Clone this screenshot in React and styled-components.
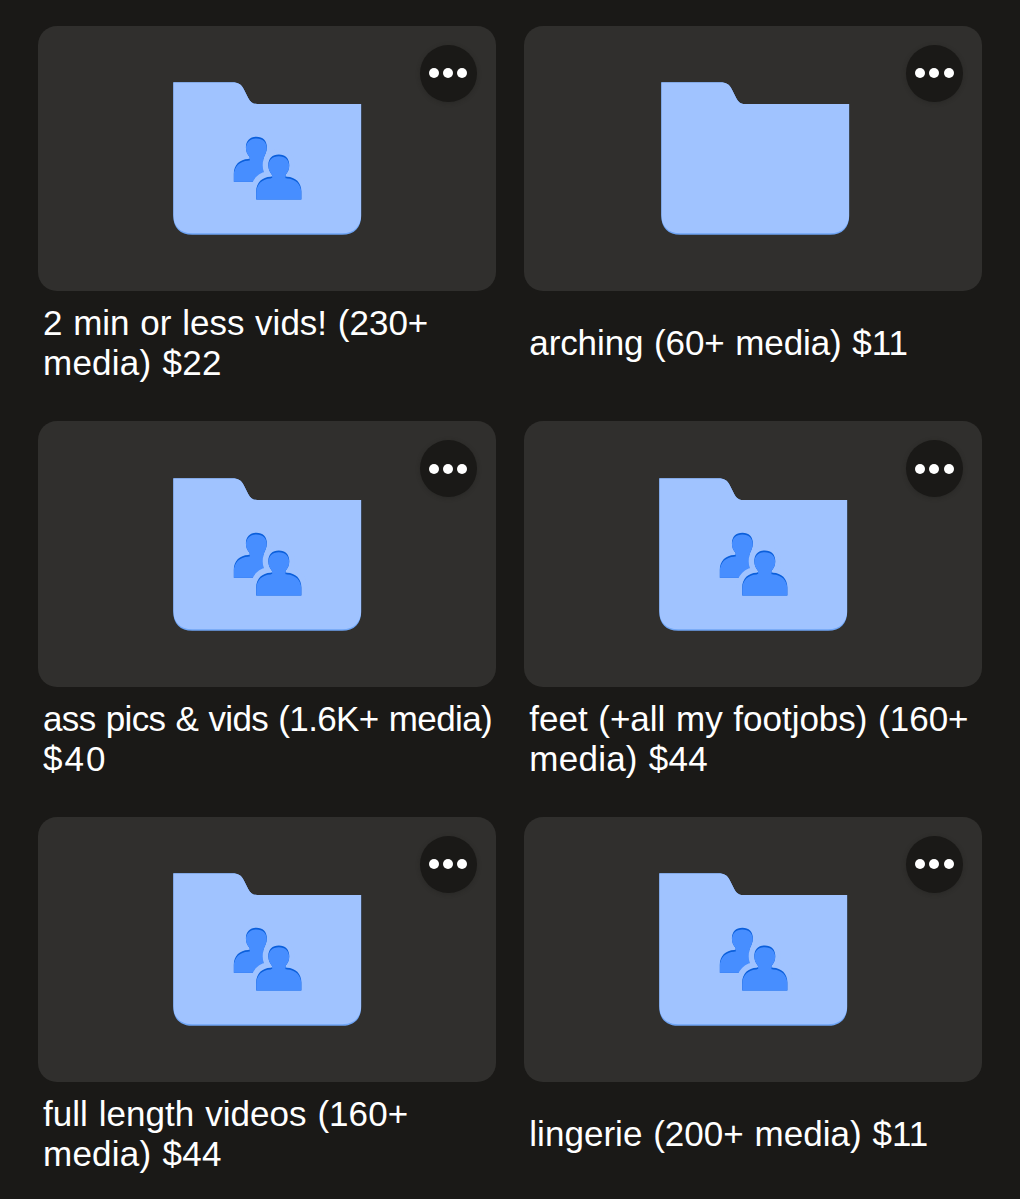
import React, { useId } from 'react'
import styled, { createGlobalStyle } from 'styled-components'

const folders = [
    { id: 1, shared: true, lines: [['2 min or less vids! (230+', 0], ['media) $22', 0.25]] },
    { id: 2, shared: false, lines: [['arching (60+ media) $11', -0.1]] },
    { id: 3, shared: true, lines: [['ass pics & vids (1.6K+ media)', -0.62], ['$40', 2]] },
    { id: 4, shared: true, lines: [['feet (+all my footjobs) (160+', -0.02], ['media) $44', 0.25]] },
    { id: 5, shared: true, lines: [['full length videos (160+', 0.05], ['media) $44', 0.25]] },
    { id: 6, shared: true, lines: [['lingerie (200+ media) $11', 0.03]] },
]

const folderPath = 'M0 0H59C65 0 68 2 70.6 7L75 15.6C77.2 19.8 79.6 21.7 84 21.7H188V133.5C188 145.5 181 152.5 169 152.5H19C7 152.5 0 145.5 0 133.5Z'
const frontPath = 'M83.1 117.4V109.4C83.1 100.4 89.2 94.8 97.4 94.6C99.4 94.6 99.4 93.7 98.6 92.4C96.4 89.6 95.2 86.8 95.2 83.2C95.2 76.2 99.2 72.4 105.7 72.4C112.2 72.4 116.2 76.2 116.2 83.2C116.2 86.8 115 89.6 112.8 92.4C112 93.7 112 94.6 114 94.6C122.2 94.8 128.3 100.4 128.3 109.4V117.4Z'
// the person behind has no right shoulder, the one in front hides it
const backPath = 'M83.1 117.4V109.4C83.1 100.4 89.2 94.8 97.4 94.6C99.4 94.6 99.4 93.7 98.6 92.4C96.4 89.6 95.2 86.8 95.2 83.2C95.2 76.2 99.2 72.4 105.7 72.4C112.2 72.4 116.2 76.2 116.2 83.2C116.2 87.4 114 90.4 112.9 94.5V117.4Z'

const Person = ({ shape, clip }) => (
    <>
        <clipPath id={clip}><path d={shape} /></clipPath>
        <path d={shape} fill="#0b5fdb" />
        <g clipPath={`url(#${clip})`}>
            <path d={shape} fill="#478eff" transform="translate(0 1.7)" />
        </g>
    </>
)

const FolderIcon = ({ shared }) => {
    const id = useId()
    const body = `${id}-body`

    return (
        <FolderSvg viewBox="0 0 188 153" $shared={shared}>
            <clipPath id={body}><path d={folderPath} /></clipPath>
            <g transform="translate(0.2 0.3)">
                <path d={folderPath} fill="#6fa5f5" />
                <g clipPath={`url(#${body})`}>
                    <path d={`${folderPath}M0 -3H60V3H0ZM80 18H188V26H80Z`} fill="#a0c3ff" transform="translate(0 -1.6)" />
                </g>
            </g>
            {shared && (
                <g transform="translate(0.1 0.1)">
                    <g transform="translate(-22.4 -17.7)">
                        <Person shape={backPath} clip={`${id}-back`} />
                    </g>
                    {/* gap between the two people */}
                    <path d={frontPath} fill="#a0c3ff" stroke="#a0c3ff" strokeWidth="11.2" />
                    <Person shape={frontPath} clip={`${id}-front`} />
                </g>
            )}
        </FolderSvg>
    )
}

const FolderCard = ({ shared, lines }) => (
    <Card>
        <Preview>
            <FolderIcon shared={shared} />
            <MoreButton type="button" aria-label="More">
                <Dot />
                <Dot />
                <Dot />
            </MoreButton>
        </Preview>
        <Caption>
            {lines.map(([text, tracking]) => (
                <Line key={text} $tracking={tracking}>{text}</Line>
            ))}
        </Caption>
    </Card>
)

export default function App() {
    return (
        <>
            <GlobalStyle />
            <Grid>
                {folders.map(({ id, shared, lines }) => (
                    <FolderCard key={id} shared={shared} lines={lines} />
                ))}
            </Grid>
        </>
    )
}

const GlobalStyle = createGlobalStyle`
    * {
        box-sizing: border-box;
    }

    body {
        margin: 0;
        background: #1a1917;
        overflow: hidden;
    }
`

const Grid = styled.main`
    display: grid;
    grid-template-columns: 457.5px 457.5px;
    grid-auto-rows: 395.3px;
    column-gap: 28.8px;
    height: 1199px;
    padding: 26.2px 38px 0;
    overflow: hidden;
    font-family: 'Liberation Sans', Arial, sans-serif;
    color: #fff;
`

const Card = styled.article`
    display: flex;
    flex-direction: column;
`

const Preview = styled.div`
    position: relative;
    display: flex;
    align-items: center;
    justify-content: center;
    height: 265.3px;
    border-radius: 19px;
    background: #302f2d;
`

const FolderSvg = styled.svg`
    display: block;
    width: 188px;
    height: 153px;
    margin-left: ${({ $shared }) => ($shared ? '0.9px' : '3px')};
    overflow: visible;
`

const MoreButton = styled.button`
    position: absolute;
    top: 18.8px;
    right: 19px;
    display: flex;
    align-items: center;
    justify-content: center;
    gap: 4.3px;
    width: 57px;
    height: 57px;
    padding: 0;
    border: 0;
    border-radius: 50%;
    background: #1a1917;
    box-shadow: 0 1px 4px rgba(26, 25, 23, 0.35);
`

const Dot = styled.span`
    width: 10px;
    height: 10px;
    border-radius: 50%;
    background: #fff;
`

const Caption = styled.div`
    display: flex;
    flex-direction: column;
    justify-content: center;
    height: 80px;
    margin-top: 11.9px;
    padding-left: 5px;
    font-size: 35px;
    line-height: 40px;
    font-kerning: normal;
    word-spacing: 1px;
`

const Line = styled.span`
    white-space: nowrap;
    letter-spacing: ${({ $tracking }) => $tracking}px;
`
